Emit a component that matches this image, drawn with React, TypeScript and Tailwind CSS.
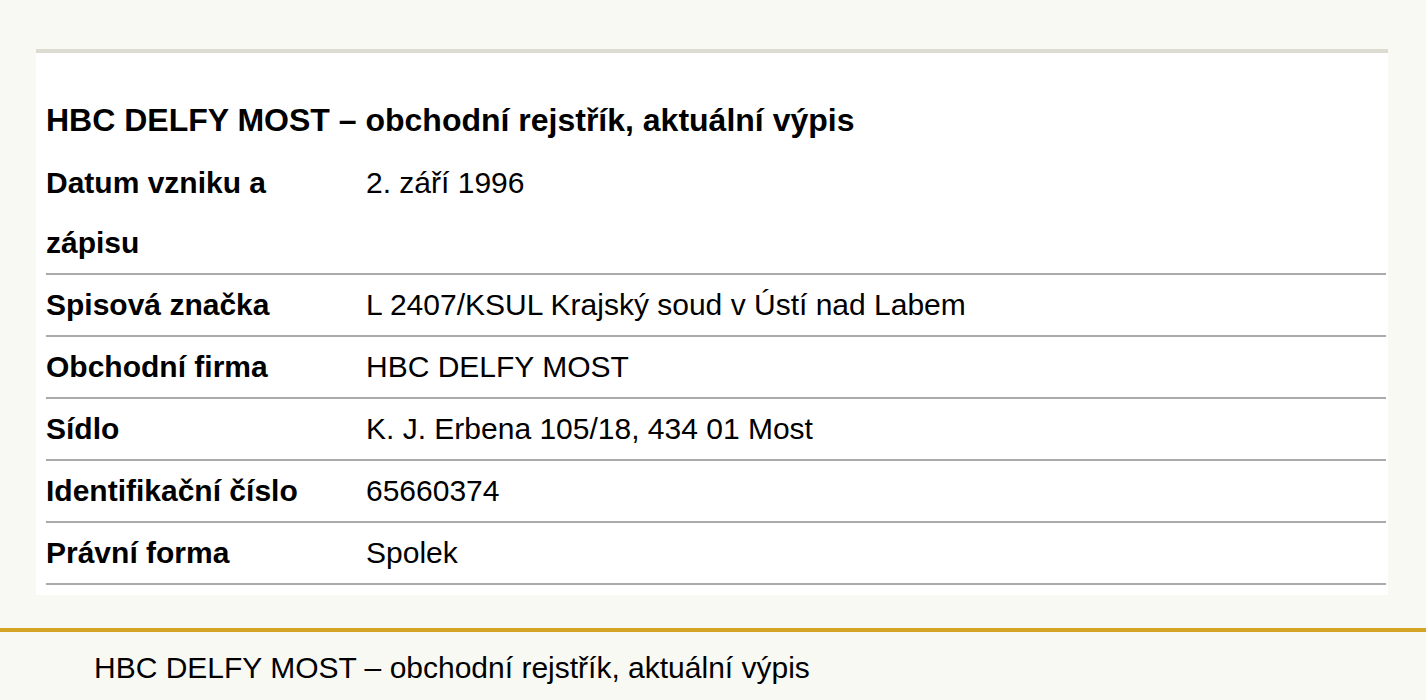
export default function App() {
  const rows: [string, string][] = [
    ["Datum vzniku a zápisu", "2. září 1996"],
    ["Spisová značka", "L 2407/KSUL Krajský soud v Ústí nad Labem"],
    ["Obchodní firma", "HBC DELFY MOST"],
    ["Sídlo", "K. J. Erbena 105/18, 434 01 Most"],
    ["Identifikační číslo", "65660374"],
    ["Právní forma", "Spolek"],
  ];

  return (
    <div className="min-h-[700px] bg-[#f9f9f4] font-['Liberation_Sans',Arial,sans-serif] text-black">
      <div className="pt-[49px] pl-[36px] pr-[38px]">
        {/* Card */}
        <div className="bg-white border-t-4 border-[#dcdcd2] pt-[37px] pb-[10px] pl-[10px] pr-[2px]">
          <h1 className="text-[32px] font-bold leading-[60px] mb-[3px]">
            HBC DELFY MOST – obchodní rejstřík, aktuální výpis
          </h1>
          <table className="w-full border-collapse text-[30px] leading-[60px]">
            <tbody>
              {rows.map(([label, value]) => (
                <tr key={label} className="border-b-2 border-[#aaaaaa] align-top">
                  <th className="w-[320px] p-0 pr-4 text-left font-bold">{label}</th>
                  <td className="p-0">{value}</td>
                </tr>
              ))}
            </tbody>
          </table>
        </div>
      </div>

      {/* Footer */}
      <footer className="mt-[33px] border-t-4 border-[#d4a424] pl-[94px] pt-[18px]">
        <p className="text-[30px] leading-[36px]">HBC DELFY MOST – obchodní rejstřík, aktuální výpis</p>
      </footer>
    </div>
  );
}
